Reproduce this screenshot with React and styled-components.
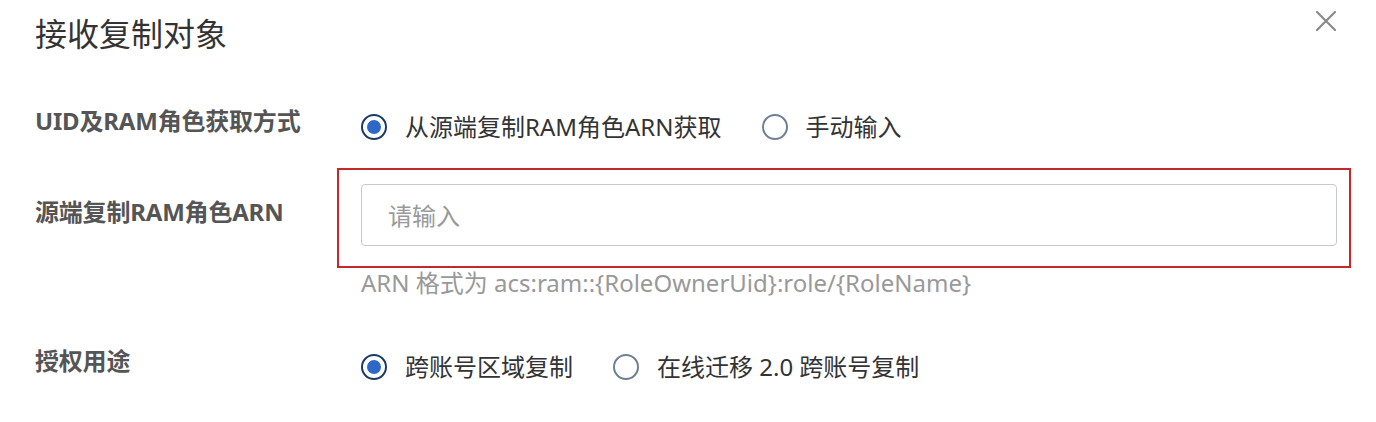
import React from 'react';
import styled, { createGlobalStyle } from 'styled-components';

const Global = createGlobalStyle`
  body {
    margin: 0;
    background: #fff;
    font-family: "Noto Sans", "Noto Sans CJK SC", sans-serif;
  }
`;

const Dialog = styled.div`
  width: 1376px;
  height: 422px;
  box-sizing: border-box;
  padding: 0 40px 0 35px;
  background: #fff;
  overflow: hidden;
`;

const Header = styled.div`
  display: flex;
  justify-content: space-between;
  align-items: flex-start;
  padding-top: 12px;
`;

const Title = styled.h2`
  margin: 0;
  font-size: 32px;
  line-height: 44px;
  font-weight: 400;
  color: #333;
`;

const Close = styled.button`
  border: 0;
  background: none;
  padding: 0;
  margin-top: -1px;
  width: 20px;
  height: 20px;
  display: flex;
  cursor: pointer;
`;

const Form = styled.div`
  margin-top: 48px;
  display: flex;
  flex-direction: column;
`;

const Row = styled.div`
  display: flex;
  align-items: flex-start;
  margin-bottom: ${p => p.$mb || 0}px;
`;

const Label = styled.div`
  width: 326px;
  flex-shrink: 0;
  padding-top: ${p => p.$pt || 0}px;
  font-size: 24px;
  line-height: 34px;
  font-weight: 700;
  letter-spacing: -0.2px;
  color: #555;
`;

const Control = styled.div`
  flex: 1;
`;

const RadioGroup = styled.div`
  display: flex;
  align-items: center;
  gap: 40px;
  padding-top: 6px;
`;

const RadioItem = styled.label`
  display: flex;
  align-items: center;
  gap: 18px;
  font-size: 24px;
  line-height: 34px;
  color: #333;
  cursor: pointer;
`;

const Circle = styled.span`
  width: 26px;
  height: 26px;
  box-sizing: border-box;
  border-radius: 50%;
  border: ${p => (p.$checked ? '2.5px solid #1d3966' : '2px solid #6f7f95')};
  display: flex;
  align-items: center;
  justify-content: center;
  &::after {
    content: '';
    display: ${p => (p.$checked ? 'block' : 'none')};
    width: 14px;
    height: 14px;
    border-radius: 50%;
    background: #2d68c8;
  }
`;

const Highlight = styled.div`
  position: relative;
  width: 976px;
  &::before {
    content: '';
    position: absolute;
    top: -16px;
    left: -24px;
    right: -14px;
    bottom: -22px;
    border: 2px solid #c3282a;
    pointer-events: none;
  }
`;

const Input = styled.input`
  display: block;
  width: 100%;
  height: 62px;
  box-sizing: border-box;
  border: 1.5px solid #c6c9cd;
  border-radius: 4px;
  padding: 0 26px;
  font-family: inherit;
  font-size: 24px;
  color: #333;
  outline: none;
  &::placeholder {
    color: #999;
  }
`;

const Help = styled.div`
  margin-top: 20px;
  font-size: 24px;
  line-height: 34px;
  color: #999;
`;

const Radio = ({ checked, children }) => (
  <RadioItem>
    <Circle $checked={checked} />
    {children}
  </RadioItem>
);

export default function App() {
  return (
    <>
      <Global />
      <Dialog>
        <Header>
          <Title>接收复制对象</Title>
          <Close aria-label="close">
            <svg width="20" height="20" viewBox="0 0 20 20">
              <path d="M1 1L19 19M19 1L1 19" stroke="#8a8a8a" strokeWidth="2.2" strokeLinecap="round" />
            </svg>
          </Close>
        </Header>
        <Form>
          <Row $mb={40}>
            <Label>UID及RAM角色获取方式</Label>
            <Control>
              <RadioGroup>
                <Radio checked>从源端复制RAM角色ARN获取</Radio>
                <Radio>手动输入</Radio>
              </RadioGroup>
            </Control>
          </Row>
          <Row $mb={44}>
            <Label $pt={11}>源端复制RAM角色ARN</Label>
            <Control>
              <Highlight>
                <Input placeholder="请输入" />
              </Highlight>
              <Help>ARN 格式为 acs:ram::{'{RoleOwnerUid}'}:role/{'{RoleName}'}</Help>
            </Control>
          </Row>
          <Row>
            <Label>授权用途</Label>
            <Control>
              <RadioGroup>
                <Radio checked>跨账号区域复制</Radio>
                <Radio>在线迁移 2.0 跨账号复制</Radio>
              </RadioGroup>
            </Control>
          </Row>
        </Form>
      </Dialog>
    </>
  );
}
